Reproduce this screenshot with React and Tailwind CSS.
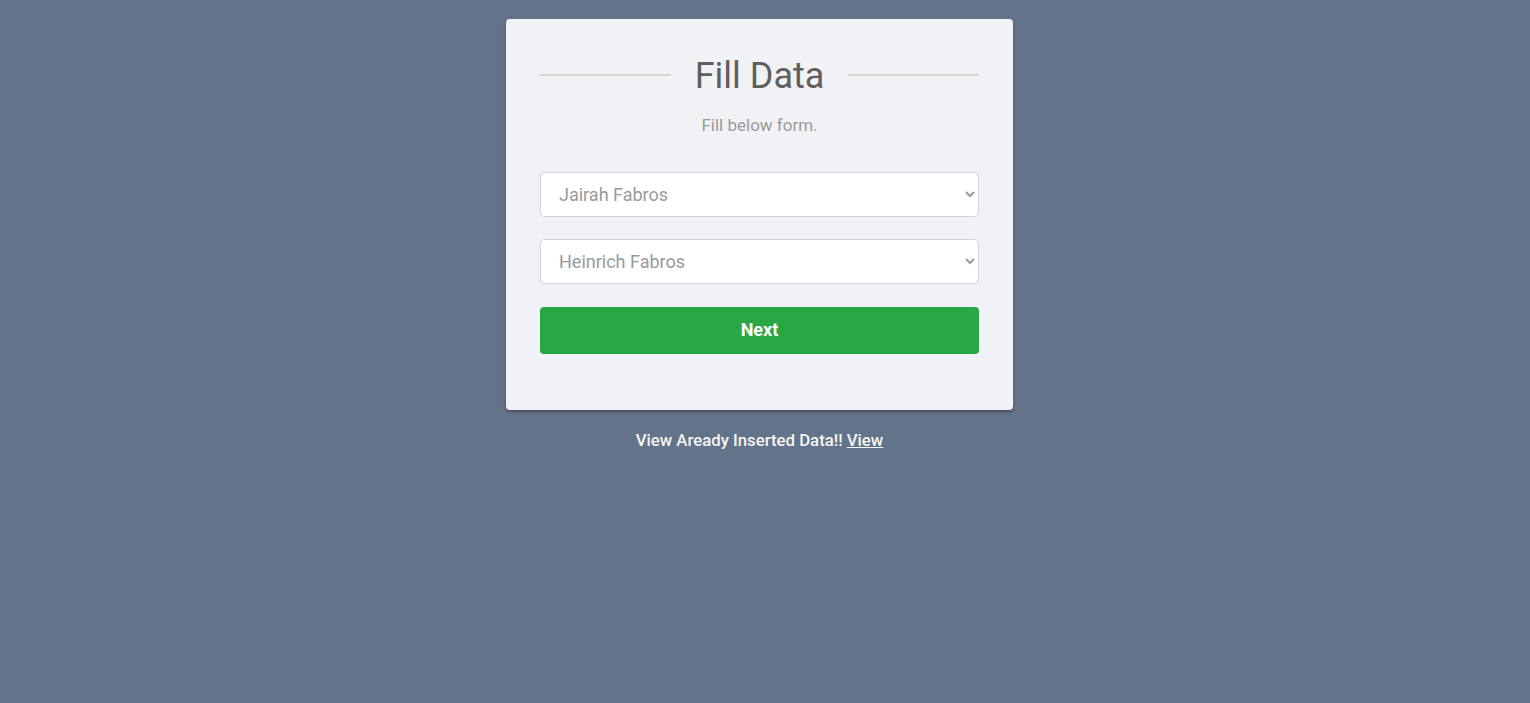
import { useState } from 'react'

function App() {
  const [first, setFirst] = useState('Jairah Fabros')
  const [second, setSecond] = useState('Heinrich Fabros')

  return (
    <div className="flex min-h-screen justify-center bg-[#637389] pt-[19px] pr-[11px] font-['Roboto','Liberation_Sans',sans-serif]">
      <div className="w-[507px]">
        <form
          onSubmit={(e) => e.preventDefault()}
          className="rounded-[4px] bg-[#f1f2f6] px-[34px] pt-[35px] pb-[56px] shadow-[0_2px_3px_rgba(0,0,0,0.3)]"
        >
          {/* Heading */}
          <div className="flex items-center gap-6">
            <div className="mb-[2px] h-[2px] flex-1 bg-[#d6d6d6]" />
            <h1 className="text-[36px] leading-[44px] text-[#5f5f5f]">Fill Data</h1>
            <div className="mb-[2px] h-[2px] flex-1 bg-[#d6d6d6]" />
          </div>
          <p className="mt-[17px] text-center text-[17px] leading-[20px] text-[#9a9a9a]">Fill below form.</p>

          <select
            value={first}
            onChange={(e) => setFirst(e.target.value)}
            className="mt-[37px] block h-[45px] w-full rounded-[4px] border border-[#ced4da] bg-white pl-[14px] pr-1 text-[18px] text-[#959ba0]"
          >
            <option>Jairah Fabros</option>
            <option>Heinrich Fabros</option>
          </select>

          <select
            value={second}
            onChange={(e) => setSecond(e.target.value)}
            className="mt-[22px] block h-[45px] w-full rounded-[4px] border border-[#ced4da] bg-white pl-[14px] pr-1 text-[18px] text-[#959ba0]"
          >
            <option>Jairah Fabros</option>
            <option>Heinrich Fabros</option>
          </select>

          <button
            type="submit"
            className="mt-[23px] block h-[47px] w-full rounded-[4px] bg-[#28a745] pb-[2px] text-[18px] font-bold text-white"
          >
            Next
          </button>
        </form>

        <p className="mt-[18px] text-center text-[16.75px] font-medium text-[#f5f5f5]">
          View Aready Inserted Data!! <a href="#" className="underline">View</a>
        </p>
      </div>
    </div>
  )
}

export default App
